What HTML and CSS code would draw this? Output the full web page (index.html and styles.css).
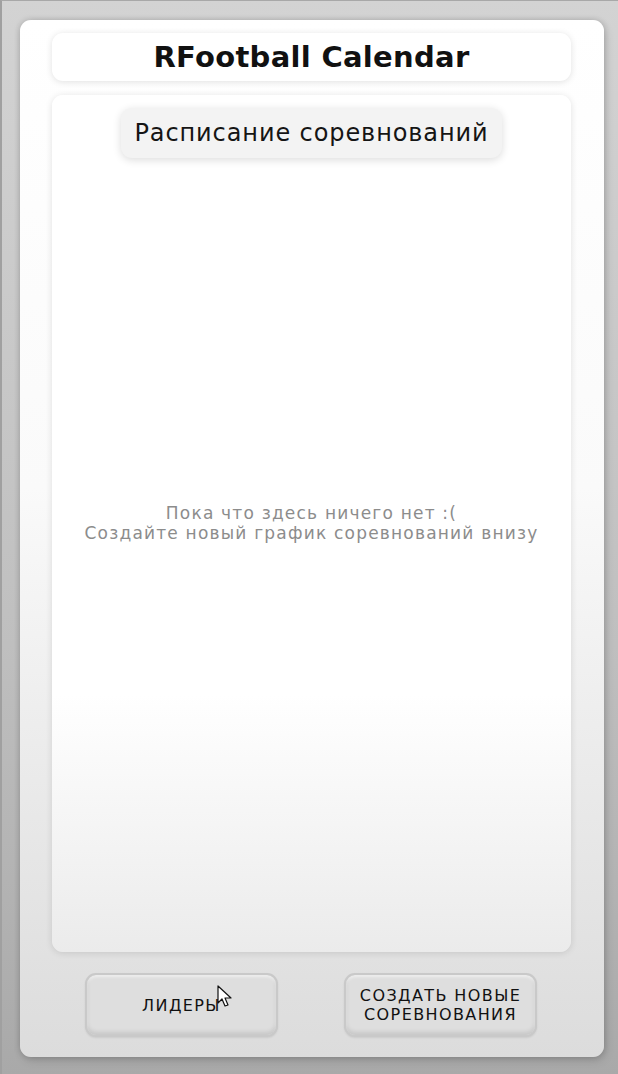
FILE: index.html
```html
<!DOCTYPE html>
<html lang="ru">
<head>
<meta charset="utf-8">
<title>RFootball Calendar</title>
<link rel="stylesheet" href="styles.css">
</head>
<body>
<div class="app">
  <header class="header">
    <h1 class="title">RFootball Calendar</h1>
  </header>
  <main class="panel">
    <div class="pill">Расписание соревнований</div>
    <div class="empty">
      <p>Пока что здесь ничего нет :(</p>
      <p>Создайте новый график соревнований внизу</p>
    </div>
  </main>
  <div class="actions">
    <button class="btn btn-leaders"><span class="line">ЛИДЕРЫ</span>
      <svg class="cursor" width="18" height="24" viewBox="0 0 18 24"><path d="M1 1 L1 18 L5 14 L8 21 L11 20 L8 13 L14 13 Z" fill="#fff" stroke="#111" stroke-width="1.2" stroke-linejoin="round"/></svg>
    </button>
    <button class="btn"><span class="line">СОЗДАТЬ НОВЫЕ</span><span class="line">СОРЕВНОВАНИЯ</span></button>
  </div>
</div>
</body>
</html>
```
FILE: styles.css
```css
html, body {
  margin: 0;
  padding: 0;
}
body {
  width: 618px;
  height: 1074px;
  background: linear-gradient(180deg, #d3d3d3 0%, #bfbfbf 60%, #a9a9a9 100%);
  border-left: 2px solid #a0a0a0;
  box-sizing: border-box;
  border-top: 1px solid #a8a8a8;
  padding: 19px 14px 17px 18px;
  font-family: "DejaVu Sans", "Noto Sans", sans-serif;
  overflow: hidden;
}
.app {
  height: 1037px;
  border-radius: 11px;
  background: linear-gradient(180deg, #ffffff 0%, #fafafa 45%, #e9e9e9 75%, #dcdcdc 100%);
  box-shadow: 0 0 6px rgba(0,0,0,0.18), 2px 4px 10px rgba(0,0,0,0.12);
  padding: 13px 33px 0 32px;
  box-sizing: border-box;
  display: flex;
  flex-direction: column;
}
.header {
  height: 48px;
  border-radius: 11px;
  background: #fff;
  box-shadow: 0 1px 7px rgba(0,0,0,0.12);
  display: flex;
  align-items: center;
  justify-content: center;
}
.title {
  margin: 0;
  font-size: 29px;
  font-weight: bold;
  color: #111;
  letter-spacing: 0.3px;
  font-family: "DejaVu Sans", sans-serif;
}
.panel {
  margin-top: 14px;
  height: 857px;
  border-radius: 11px;
  background: linear-gradient(180deg, #ffffff 0%, #ffffff 70%, #ebebeb 100%);
  box-shadow: 0 1px 7px rgba(0,0,0,0.12);
  display: flex;
  flex-direction: column;
  align-items: center;
  padding-top: 13px;
  box-sizing: border-box;
}
.pill {
  width: 381px;
  height: 50px;
  border-radius: 11px;
  background: #f3f3f3;
  box-shadow: 0 2px 8px rgba(0,0,0,0.14);
  display: flex;
  align-items: center;
  justify-content: center;
  font-size: 24px;
  color: #151515;
  letter-spacing: 0.9px;
  box-sizing: border-box;
}
.empty {
  margin-top: 345px;
  text-align: center;
  color: #8c8c8c;
  font-size: 17px;
  line-height: 20px;
  letter-spacing: 1.2px;
}
.empty p {
  margin: 0;
}
.actions {
  margin-top: 21px;
  display: flex;
  justify-content: center;
  gap: 66px;
  padding-right: 1px;
}
.btn {
  position: relative;
  width: 193px;
  height: 64px;
  border-radius: 11px;
  border: 2px solid #c9c9c9;
  background: #dedede;
  box-shadow: inset 0 -3px 4px rgba(0,0,0,0.10), inset 0 2px 3px rgba(255,255,255,0.5), 0 1px 2px rgba(0,0,0,0.08);
  font-family: "DejaVu Sans", sans-serif;
  font-size: 16px;
  color: #111;
  padding: 0;
  display: flex;
  flex-direction: column;
  align-items: center;
  justify-content: center;
}
.line {
  display: block;
  height: 19px;
  line-height: 19px;
  letter-spacing: 1.4px;
}
.cursor {
  position: absolute;
  left: 130px;
  top: 10px;
}
```
